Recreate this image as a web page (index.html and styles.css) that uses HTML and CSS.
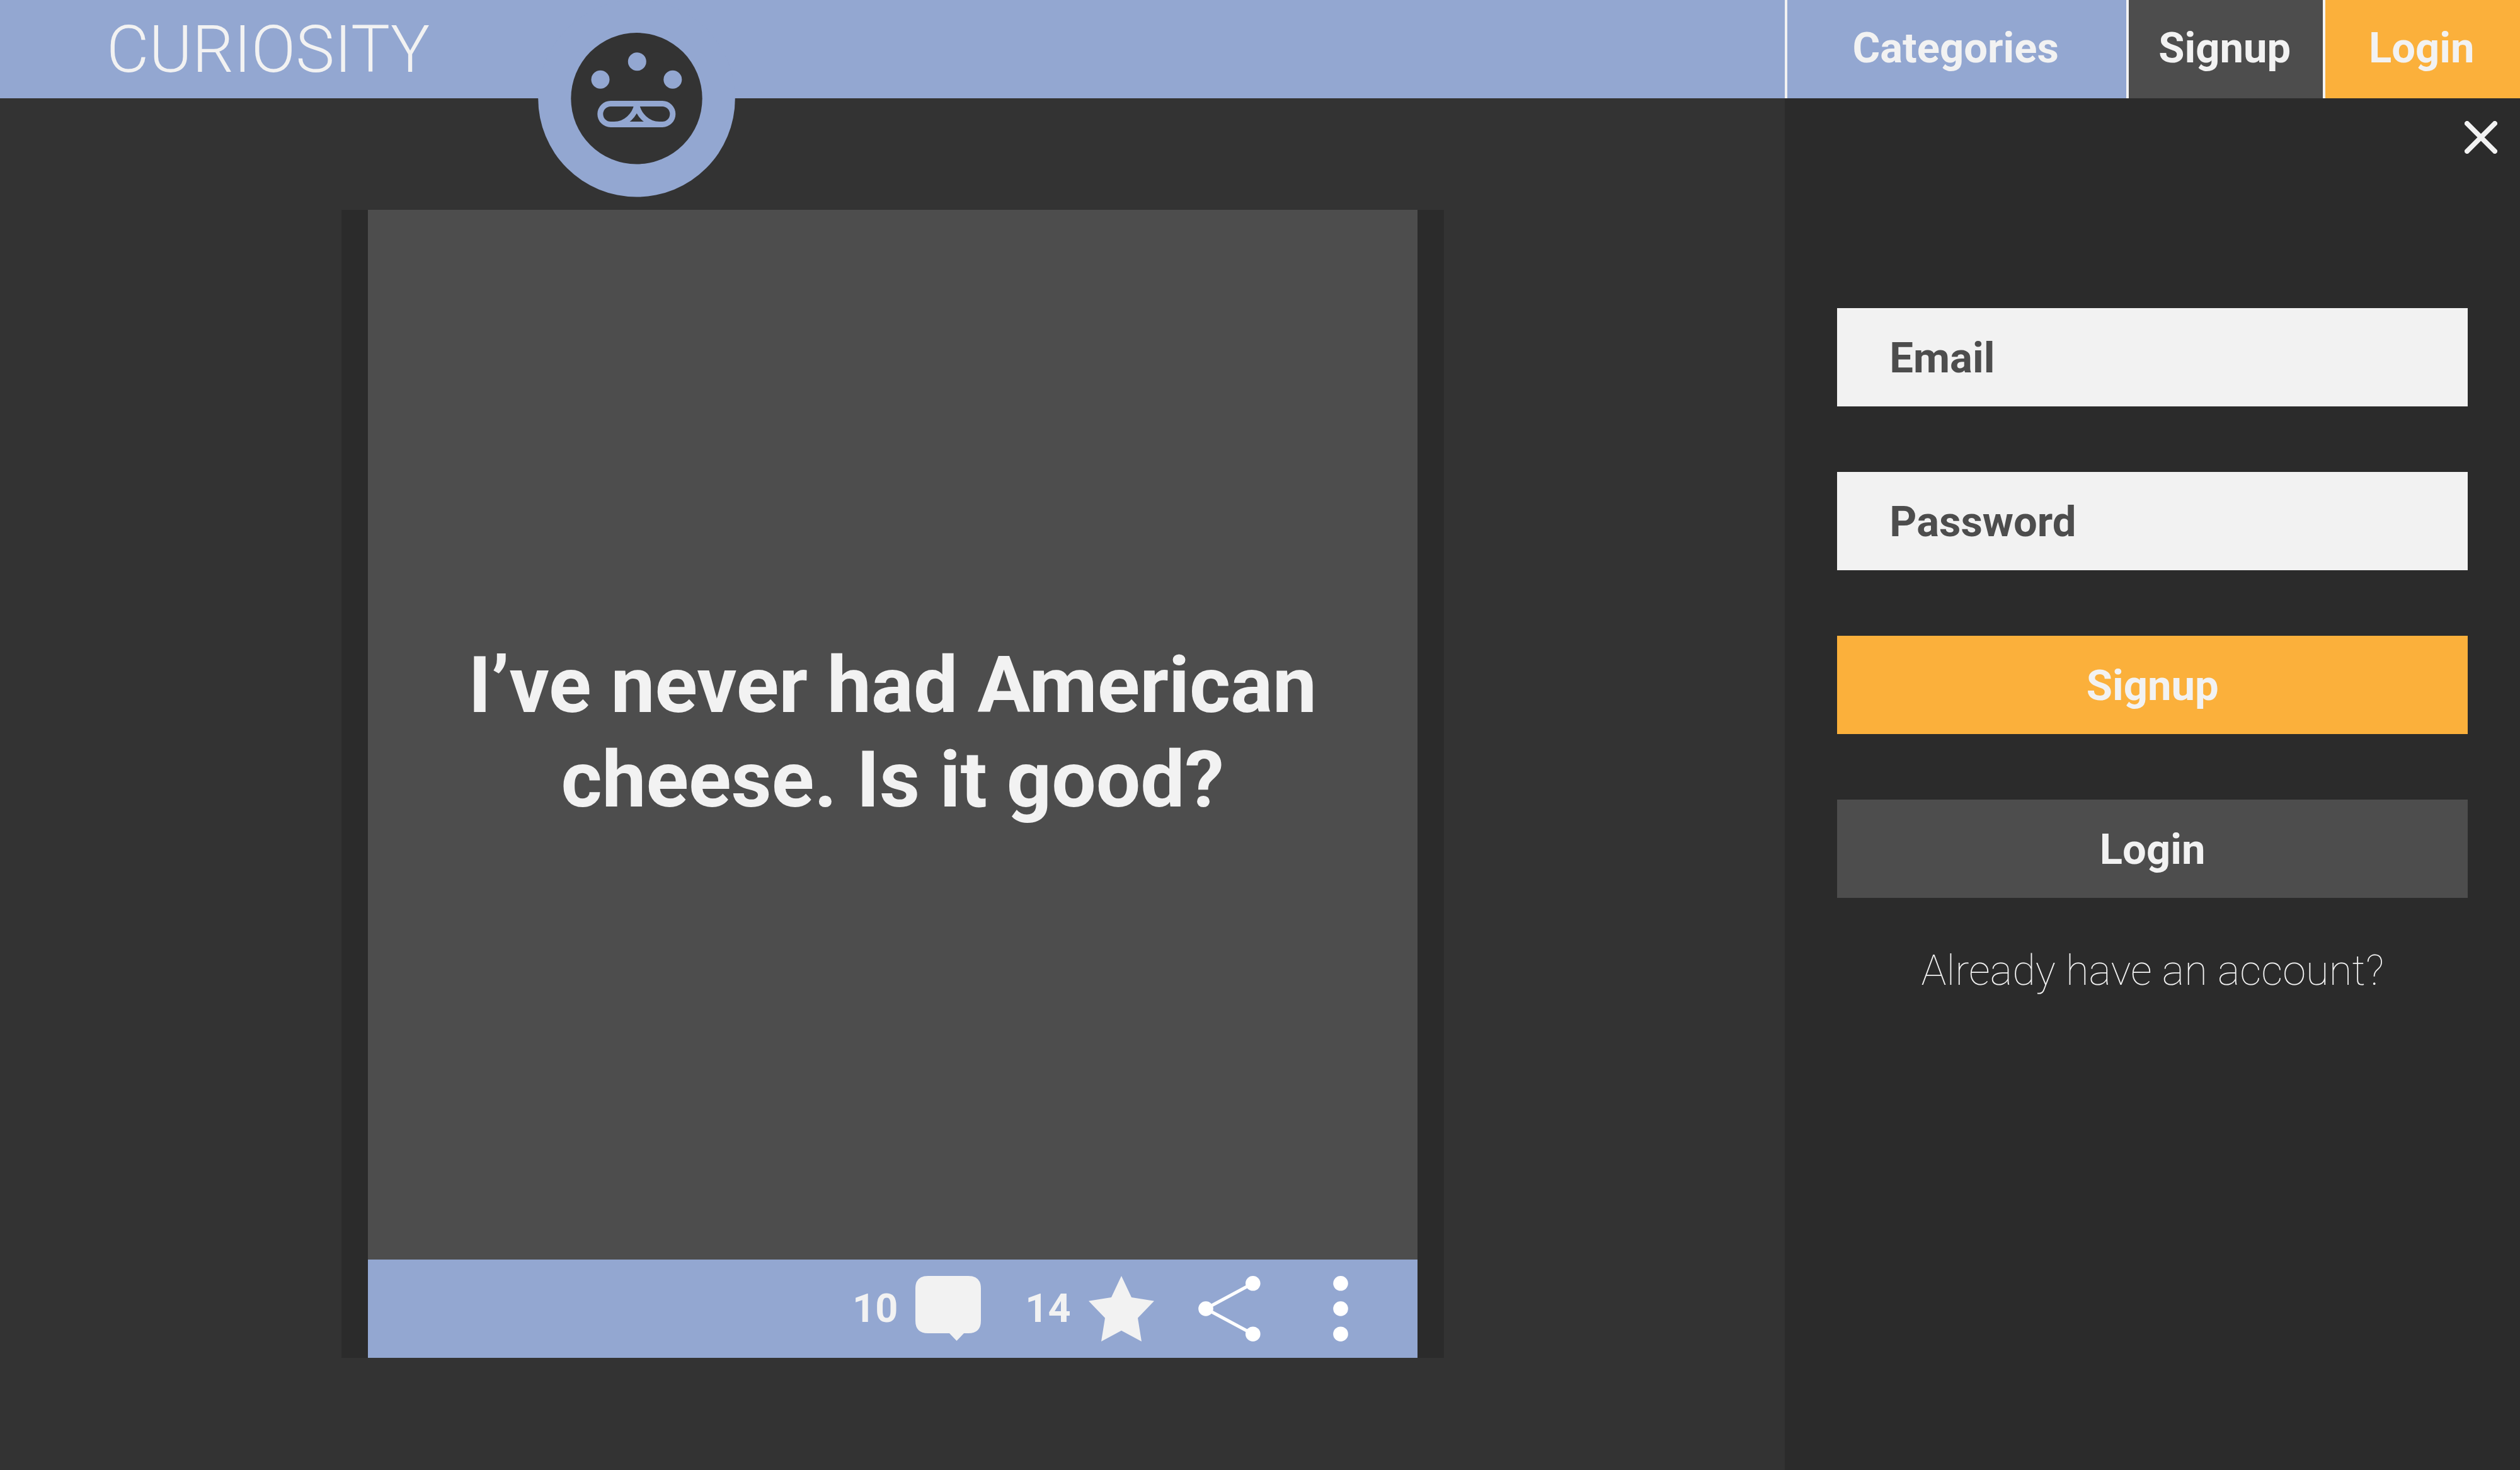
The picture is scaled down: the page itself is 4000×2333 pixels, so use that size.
FILE: index.html
```html
<!DOCTYPE html>
<html lang="en">
<head>
  <meta charset="utf-8">
  <meta name="viewport" content="width=device-width, initial-scale=1">
  <title>Curiosity</title>
  <link rel="stylesheet" href="styles.css">
</head>
<body>
  <header class="topbar">
    <div class="brand">
      <a class="wordmark" href="#">CURIOSITY</a>
    </div>
    <nav class="nav">
      <a class="nav-link nav-categories" href="#">Categories</a>
      <a class="nav-link nav-signup" href="#">Signup</a>
      <a class="nav-link nav-login" href="#">Login</a>
    </nav>
    <a class="logo" href="#" aria-label="Curiosity home">
      <svg class="logo-art" viewBox="854 0 313 313" aria-hidden="true">
        <circle cx="1010.5" cy="156.3" r="156.3" fill="#93a7d1"/>
        <circle cx="1010.5" cy="156.3" r="104.2" fill="#333333"/>
        <g fill="#93a7d1">
          <circle cx="953" cy="126.3" r="14.5"/>
          <circle cx="1011.3" cy="97.8" r="14.5"/>
          <circle cx="1067.8" cy="126.3" r="14.5"/>
        </g>
        <g fill="none" stroke="#93a7d1" stroke-width="9">
          <rect x="952.8" y="164.5" width="115" height="33" rx="16.5"/>
          <path d="M1011 166C1008 182 994 197.5 975 197.5M1010.4 166C1013.4 182 1027.4 197.5 1046.4 197.5"/>
        </g>
      </svg>
    </a>
  </header>

  <div class="layout">
    <main class="feed">
      <article class="card">
        <div class="card-face">
          <h1 class="question">I’ve never had American cheese. Is it good?</h1>
        </div>
        <footer class="card-bar">
          <button class="action" type="button" aria-label="10 comments">
            <span class="count">10</span>
            <svg class="icon" viewBox="0 0 104 104" aria-hidden="true">
              <path fill="#f2f2f2" d="M20 0H84Q104 0 104 20V71Q104 91 84 91H77L65.5 103L54 91H20Q0 91 0 71V20Q0 0 20 0Z"/>
            </svg>
          </button>
          <button class="action" type="button" aria-label="14 stars">
            <span class="count">14</span>
            <svg class="icon" viewBox="0 0 104 104" aria-hidden="true">
              <path fill="#f2f2f2" d="M52 0L68 34L104 39.7L78 66.7L84 104L52 86.7L20 104L26 66.7L0 39.7L36 34Z"/>
            </svg>
          </button>
          <button class="action" type="button" aria-label="Share">
            <svg class="icon" viewBox="0 0 104 104" aria-hidden="true">
              <path d="M86.8 11.8L12 52L86.8 92.2" fill="none" stroke="#fff" stroke-width="5.2"/>
              <g fill="#fff">
                <circle cx="86.8" cy="11.8" r="11.8"/>
                <circle cx="12" cy="52" r="11.8"/>
                <circle cx="86.8" cy="92.2" r="11.8"/>
              </g>
            </svg>
          </button>
          <button class="action" type="button" aria-label="More">
            <svg class="icon" viewBox="0 0 104 104" aria-hidden="true">
              <g fill="#fff">
                <circle cx="52" cy="11.8" r="11.8"/>
                <circle cx="52" cy="52" r="11.8"/>
                <circle cx="52" cy="92.2" r="11.8"/>
              </g>
            </svg>
          </button>
        </footer>
      </article>
    </main>

    <aside class="panel">
      <button class="close" type="button" aria-label="Close">
        <svg class="close-icon" viewBox="0 0 52 52" aria-hidden="true">
          <path d="M4 4L48 48M48 4L4 48" fill="none" stroke="#f2f2f2" stroke-width="8" stroke-linecap="round"/>
        </svg>
      </button>
      <form class="form">
        <input class="field" type="email" placeholder="Email" aria-label="Email">
        <input class="field" type="password" placeholder="Password" aria-label="Password">
        <button class="button button-primary" type="submit">Signup</button>
        <button class="button button-secondary" type="button">Login</button>
      </form>
      <p class="hint">Already have an account?</p>
    </aside>
  </div>
</body>
</html>
```

FILE: styles.css
```css
:root {
  --blue: #93a7d1;
  --ink: #333333;
  --shade: #2b2b2b;
  --grey: #4d4d4d;
  --light: #f2f2f2;
  --amber: #fbb03b;
  --bar: 156px;
}

* {
  box-sizing: border-box;
}

body {
  margin: 0;
  min-height: 100vh;
  display: flex;
  flex-direction: column;
  background: var(--ink);
  color: var(--light);
  font-family: Roboto, "Liberation Sans", sans-serif;
  font-size: 67px;
  line-height: 78px;
}

a {
  color: inherit;
  text-decoration: none;
}

button,
input {
  margin: 0;
  border: 0;
  border-radius: 0;
  font: inherit;
  color: inherit;
}

/* Top bar */
.topbar {
  position: relative;
  display: grid;
  grid-template-columns: 34fr 14fr;
  height: var(--bar);
  background: var(--blue);
}

.brand {
  display: flex;
  align-items: center;
  padding: 2px 0 0 169px;
}

.wordmark {
  font-size: 104px;
  font-weight: 300;
  line-height: 120px;
}

.nav {
  display: grid;
  grid-template-columns: 26fr 15fr 15fr;
}

.nav-link {
  display: flex;
  align-items: center;
  justify-content: center;
  border-left: 4px solid var(--light);
  font-weight: 700;
  padding: 0 4px 4px 0;
}

.nav-signup {
  background: var(--grey);
}

.nav-login {
  background: var(--amber);
}

.logo {
  position: absolute;
  top: 0;
  left: 21.35%;
}

.logo-art {
  display: block;
  width: 313px;
  height: 313px;
}

/* Page body */
.layout {
  flex: 1;
  display: grid;
  grid-template-columns: 34fr 14fr;
}

.feed {
  display: grid;
  grid-template-columns: 13fr 42fr 13fr;
  align-items: start;
  padding: 177px 0;
}

.card {
  grid-column: 2;
  padding: 0 42px;
  background: var(--shade);
}

.card-face {
  display: flex;
  align-items: center;
  justify-content: center;
  aspect-ratio: 1;
  padding: 0 125px 6px;
  background: var(--grey);
}

.question {
  margin: 0;
  font-size: 125px;
  font-weight: 700;
  line-height: 150px;
  text-align: center;
}

.card-bar {
  display: flex;
  align-items: center;
  justify-content: flex-end;
  gap: 70px;
  height: var(--bar);
  padding-right: 70px;
  background: var(--blue);
}

.action {
  display: flex;
  align-items: center;
  gap: 28px;
  padding: 0;
  background: none;
}

.count {
  font-size: 63px;
  font-weight: 700;
}

.icon {
  display: block;
  width: 104px;
  height: 104px;
}

/* Signup panel */
.panel {
  display: flex;
  flex-direction: column;
  padding: 36px 83px;
  background: var(--shade);
}

.close {
  align-self: flex-end;
  margin-right: -47px;
  padding: 0;
  background: none;
}

.close-icon {
  display: block;
  width: 52px;
  height: 52px;
}

.form {
  display: grid;
  gap: 104px;
  margin-top: 245px;
}

.field,
.button {
  width: 100%;
  height: var(--bar);
  font-weight: 700;
}

.field {
  padding: 2px 83px 0;
  background: var(--light);
  color: var(--grey);
}

.field::placeholder {
  color: var(--grey);
  opacity: 1;
}

.button {
  padding: 2px 0 0;
  text-align: center;
}

.button-primary {
  background: var(--amber);
}

.button-secondary {
  background: var(--grey);
}

.hint {
  margin: 76px 0 0;
  font-weight: 100;
  text-align: center;
}
```
